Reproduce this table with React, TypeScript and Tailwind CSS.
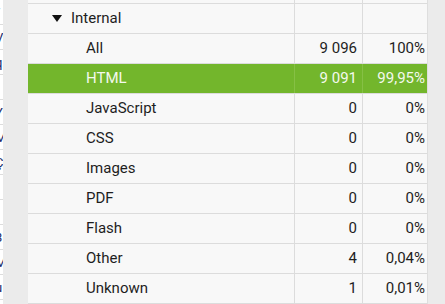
import React from "react";

const rows = [
  { name: "All", n: "9 096", p: "100%" },
  { name: "HTML", n: "9 091", p: "99,95%", sel: true },
  { name: "JavaScript", n: "0", p: "0%" },
  { name: "CSS", n: "0", p: "0%" },
  { name: "Images", n: "0", p: "0%" },
  { name: "PDF", n: "0", p: "0%" },
  { name: "Flash", n: "0", p: "0%" },
  { name: "Other", n: "4", p: "0,04%" },
  { name: "Unknown", n: "1", p: "0,01%" },
];

const frags = ["/", "V", "q", "r", "Y", "M", "Ç", "I", "i", "3", "M", "u", "c"];

export default function App() {
  return (
    <div
      className="w-[445px] h-[304px] flex bg-[#ebebeb] overflow-hidden text-[15px] text-[#1e1e1e]"
      style={{ fontFamily: "Roboto, 'Noto Sans', sans-serif" }}
    >
      <div className="w-[3px] bg-white overflow-hidden flex flex-col pt-[0px]">
        {frags.map((f, i) => (
          <div
            key={i}
            className="h-[25px] shrink-0 border-b border-[#dcdcdc] flex items-center text-[13px] text-[#1a2a6a] -ml-[5px] leading-none"
          >
            {f}
          </div>
        ))}
      </div>
      <div className="w-[25px]" />
      <div className="w-[400px] flex flex-col bg-[#f8f8f8] border-r border-[#dedede]">
        <div className="h-[3px] flex">
          <div className="w-[266px]" />
          <div className="w-[68px] border-l border-[#dcdcdc]" />
          <div className="w-[65px] border-l border-[#dcdcdc]" />
        </div>
        <div className="h-[30px] flex border-t border-[#dcdcdc]">
          <div className="w-[266px] flex items-center pl-[24px] gap-[9px]">
            <svg width="10" height="7" viewBox="0 0 10 7">
              <path d="M0 0 L10 0 L5 7 Z" fill="#111" />
            </svg>
            <span>Internal</span>
          </div>
          <div className="w-[68px] border-l border-[#dcdcdc]" />
          <div className="w-[65px] border-l border-[#dcdcdc]" />
        </div>
        {rows.map((r) => (
          <div
            key={r.name}
            className={
              r.sel
                ? "h-[30px] flex border-t border-[#dcdcdc] bg-[#73b62c] text-[#f4f9ee]"
                : "h-[30px] flex border-t border-[#dcdcdc]"
            }
          >
            <div className="w-[266px] flex items-center pl-[58px]">{r.name}</div>
            <div
              className={
                r.sel
                  ? "w-[68px] border-l border-[#86c045] flex items-center justify-end pr-[5px]"
                  : "w-[68px] border-l border-[#dcdcdc] flex items-center justify-end pr-[5px]"
              }
            >
              {r.n}
            </div>
            <div
              className={
                r.sel
                  ? "w-[65px] border-l border-[#86c045] flex items-center justify-end pr-[2px]"
                  : "w-[65px] border-l border-[#dcdcdc] flex items-center justify-end pr-[2px]"
              }
            >
              {r.p}
            </div>
          </div>
        ))}
        <div className="border-t border-[#dcdcdc]" />
      </div>
    </div>
  );
}
